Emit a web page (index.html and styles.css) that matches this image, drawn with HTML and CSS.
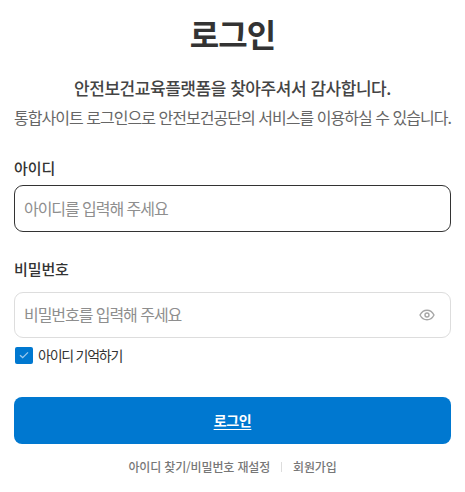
FILE: index.html
```html
<!DOCTYPE html>
<html lang="ko">
<head>
    <meta charset="UTF-8" />
    <meta name="viewport" content="width=device-width, initial-scale=1" />
    <title>로그인</title>
    <link rel="stylesheet" href="styles.css">
</head>
<body>

<main class="login">
    <h1 class="login-title">로그인</h1>

    <div class="intro">
        <p class="intro-main">안전보건교육플랫폼을 찾아주셔서 감사합니다.</p>
        <p class="intro-sub">통합사이트 로그인으로 안전보건공단의 서비스를 이용하실 수 있습니다.</p>
    </div>

    <form class="login-form">
        <div class="field field-id">
            <label class="field-label" for="user-id">아이디</label>
            <div class="input-box is-focus">
                <input type="text" id="user-id" placeholder="아이디를 입력해 주세요" />
            </div>
        </div>

        <div class="field field-pw">
            <label class="field-label" for="user-pw">비밀번호</label>
            <div class="input-box">
                <input type="password" id="user-pw" placeholder="비밀번호를 입력해 주세요" />
                <svg class="eye-icon" width="16" height="12" viewBox="0 0 16 12" fill="none" stroke="#a6a6a6" stroke-width="1.4">
                    <path d="M1 6C2.6 2.9 5 1.2 8 1.2S13.4 2.9 15 6C13.4 9.1 11 10.8 8 10.8S2.6 9.1 1 6Z" />
                    <circle cx="8" cy="6" r="2" />
                </svg>
            </div>
        </div>

        <label class="remember">
            <span class="check-box">
                <svg width="10" height="8" viewBox="0 0 10 8" fill="none" stroke="#9cc9ec" stroke-width="1.3">
                    <path d="M1 4.2L3.7 6.6L9 1.4" />
                </svg>
            </span>
            <span class="remember-text">아이디 기억하기</span>
        </label>

        <button type="button" class="login-btn">로그인</button>
    </form>

    <div class="links">
        <a href="#">아이디 찾기/비밀번호 재설정</a>
        <span class="links-bar"></span>
        <a href="#">회원가입</a>
    </div>
</main>

</body>
</html>
```

FILE: styles.css
```css
* { box-sizing: border-box; }
body {
  margin: 0;
  background: #fff;
  color: #333;
  font-family: "Noto Sans CJK KR", "Noto Sans", sans-serif;
}

.login {
  display: flex;
  flex-direction: column;
  padding: 13px 14px 0;
}
.login-title {
  margin: 0;
  text-align: center;
  font-size: 32px;
  line-height: 40px;
  font-weight: 700;
  color: #333;
  letter-spacing: -1px;
}

.intro {
  margin-top: 22px;
  text-align: center;
}
.intro p { margin: 0; white-space: nowrap; }
.intro-main {
  font-size: 17px;
  line-height: 26px;
  font-weight: 500;
  color: #444;
  letter-spacing: -0.46px;
}
.intro-sub {
  margin-top: 3px !important;
  font-size: 16px;
  line-height: 26px;
  color: #666;
  letter-spacing: -0.97px;
}

.login-form {
  display: flex;
  flex-direction: column;
  margin-top: 26px;
}
.field-label {
  display: block;
  font-size: 15px;
  line-height: 24px;
  font-weight: 500;
  color: #333;
  letter-spacing: -0.1px;
}
.field-id .field-label { margin-bottom: 5px; }
.field-pw { margin-top: 25px; }
.field-pw .field-label { margin-bottom: 11px; }

.input-box {
  display: flex;
  align-items: center;
  height: 47px;
  padding: 0 15px 2px 9px;
  border: 1px solid #ddd;
  border-radius: 9px;
  background: #fff;
}
.field-pw .input-box { height: 46px; }
.input-box.is-focus { border-color: #333; }
.input-box input {
  flex: 1;
  min-width: 0;
  border: none;
  outline: none;
  padding: 0;
  font-family: inherit;
  font-size: 16px;
  letter-spacing: -1.05px;
  color: #333;
}
.input-box input::placeholder { color: #8e8e8e; opacity: 1; }
.eye-icon { flex-shrink: 0; margin-top: 2px; }

.remember {
  display: flex;
  align-items: center;
  gap: 5px;
  margin-top: 7px;
  padding-left: 1px;
}
.check-box {
  display: flex;
  align-items: center;
  justify-content: center;
  width: 18px;
  height: 17px;
  border-radius: 2px;
  background: #0078d0;
}
.remember-text {
  font-size: 14px;
  line-height: 20px;
  color: #333;
  letter-spacing: -1.25px;
}

.login-btn {
  height: 47px;
  margin-top: 32px;
  padding: 0 0 2px;
  border: none;
  border-radius: 8px;
  background: #0078d0;
  color: #fff;
  font-family: inherit;
  font-size: 14px;
  font-weight: 700;
  text-decoration: underline;
  text-underline-offset: 3px;
  letter-spacing: -0.3px;
}

.links {
  display: flex;
  align-items: center;
  justify-content: center;
  gap: 11px;
  margin-top: 13px;
  font-size: 12px;
  line-height: 20px;
  letter-spacing: -0.15px;
}
.links a {
  color: #777;
  text-decoration: none;
  font-weight: 500;
}
.links-bar {
  width: 1px;
  height: 10px;
  background: #ddd;
}
```
